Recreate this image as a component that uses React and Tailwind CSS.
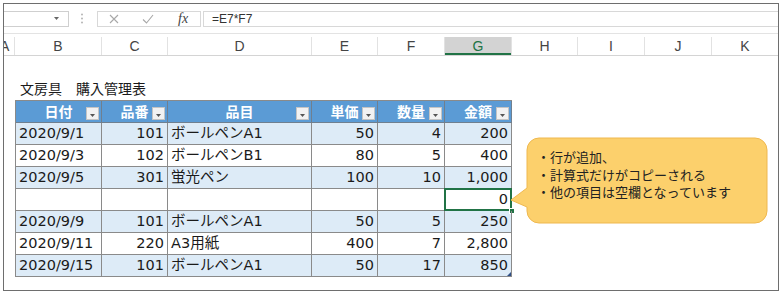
import React from 'react';

const jp = "font-['Noto_Sans_CJK_JP',sans-serif]";
const cellFont = "font-['DejaVu_Sans','Noto_Sans_CJK_JP',sans-serif]";

const colHeads = [
  { label: 'B', w: 'w-[87px]' },
  { label: 'C', w: 'w-[66px]' },
  { label: 'D', w: 'w-[144px]' },
  { label: 'E', w: 'w-[66px]' },
  { label: 'F', w: 'w-[67px]' },
  { label: 'G', w: 'w-[67px]', active: true },
  { label: 'H', w: 'w-[66px]' },
  { label: 'I', w: 'w-[67px]' },
  { label: 'J', w: 'w-[67px]' },
];

const cols = [
  { title: '日付', w: 'w-[86px]', align: 'justify-start' },
  { title: '品番', w: 'w-[66px]', align: 'justify-end' },
  { title: '品目', w: 'w-[144px]', align: 'justify-start' },
  { title: '単価', w: 'w-[66px]', align: 'justify-end' },
  { title: '数量', w: 'w-[67px]', align: 'justify-end' },
  { title: '金額', w: 'w-[67px]', align: 'justify-end' },
];

const rows = [
  ['2020/9/1', '101', 'ボールペンA1', '50', '4', '200'],
  ['2020/9/3', '102', 'ボールペンB1', '80', '5', '400'],
  ['2020/9/5', '301', '蛍光ペン', '100', '10', '1,000'],
  ['', '', '', '', '', '0'],
  ['2020/9/9', '101', 'ボールペンA1', '50', '5', '250'],
  ['2020/9/11', '220', 'A3用紙', '400', '7', '2,800'],
  ['2020/9/15', '101', 'ボールペンA1', '50', '17', '850'],
];

function FilterButton() {
  return (
    <span className="absolute right-[2px] bottom-[2px] w-[13px] h-[13px] bg-[#f2f2f2] border border-[#c4c4c4] flex items-center justify-center">
      <svg width="5" height="3" viewBox="0 0 5 3" className="mt-[3px]">
        <path d="M0 0 H5 L2.5 3 Z" fill="#555" />
      </svg>
    </span>
  );
}

function FormulaBar() {
  return (
    <div className="h-[30px] flex items-center border-b border-[#e3e3e3] font-['Liberation_Sans',sans-serif]">
      <div className="w-[65px] h-[16px] border border-l-0 border-[#cfcfcf] flex items-center justify-end pr-[9px]">
        <svg width="5" height="3" viewBox="0 0 5 3">
          <path d="M0 0 H5 L2.5 3 Z" fill="#666" />
        </svg>
      </div>
      <svg width="4" height="11" viewBox="0 0 4 11" className="ml-[11px]">
        <circle cx="2" cy="1.5" r="1" fill="#b5b5b5" />
        <circle cx="2" cy="5.5" r="1" fill="#b5b5b5" />
        <circle cx="2" cy="9.5" r="1" fill="#b5b5b5" />
      </svg>
      <div className="ml-[13px] w-[104px] h-[16px] border border-[#d8d8d8] flex items-center">
        <svg width="10" height="10" viewBox="0 0 10 10" className="ml-[11px]">
          <path d="M1 1 L9 9 M9 1 L1 9" stroke="#a8a8a8" strokeWidth="1.1" fill="none" />
        </svg>
        <svg width="12" height="10" viewBox="0 0 12 10" className="ml-[23px]">
          <path d="M1 5.5 L4.5 9 L11 1" stroke="#a8a8a8" strokeWidth="1.1" fill="none" />
        </svg>
        <span className="ml-[24px] text-[14px] leading-[14px] italic text-[#444] font-['Liberation_Serif',serif]">fx</span>
      </div>
      <div className="ml-[2px] flex-1 h-[16px] border border-r-0 border-[#d8d8d8] flex items-center pl-[8px] text-[12px] text-[#333]">
        =E7*F7
      </div>
    </div>
  );
}

function ColumnHeaders() {
  return (
    <div className="mt-[3px] h-[19px] flex border-b border-[#d4d4d4] text-[14px] text-[#444] font-['Liberation_Sans',sans-serif]">
      <div className="w-[11px] overflow-hidden border-r border-[#e2e2e2] flex items-center">
        <span className="-ml-[4px]">A</span>
      </div>
      {colHeads.map((c) => (
        <div
          key={c.label}
          className={`${c.w} flex items-center justify-center border-r border-[#e2e2e2] ${
            c.active ? 'bg-[#d3d3d3] text-[#217346] shadow-[inset_0_-2px_0_#217346]' : ''
          }`}
        >
          {c.label}
        </div>
      ))}
      <div className="flex-1 flex items-center justify-center">K</div>
    </div>
  );
}

function PurchaseTable() {
  return (
    <div className="relative w-[497px] border-l border-t border-[#8a8a8a]">
      <div className="flex">
        {cols.map((c) => (
          <div
            key={c.title}
            className={`relative ${c.w} h-[22px] bg-[#5b9bd5] border-r border-b border-[#6f7f8f] flex items-center justify-center text-white font-bold text-[14px] ${jp}`}
          >
            {c.title}
            <FilterButton />
          </div>
        ))}
      </div>
      {rows.map((r, i) => (
        <div key={i} className={`flex ${i % 2 === 0 ? 'bg-[#ddebf7]' : 'bg-white'}`}>
          {r.map((v, j) => (
            <div
              key={j}
              className={`relative ${cols[j].w} h-[22px] border-r border-b border-[#8a8a8a] flex items-center ${cols[j].align} px-[3px] text-[14.5px] text-[#1a1a1a] ${cellFont}`}
            >
              {v}
              {i === 3 && j === 5 && (
                <>
                  <span className="absolute -left-[1px] -top-[1px] -right-[1px] -bottom-[1px] border-2 border-[#217346]" />
                  <span className="absolute -right-[4px] -bottom-[4px] w-[6px] h-[6px] bg-[#217346] border border-white" />
                </>
              )}
            </div>
          ))}
        </div>
      ))}
      <svg width="4" height="4" viewBox="0 0 4 4" className="absolute right-[1px] bottom-[1px]">
        <path d="M4 0 V4 H0 Z" fill="#2f4f86" />
      </svg>
    </div>
  );
}

export default function App() {
  return (
    <div className="relative w-[783px] h-[297px] bg-white p-[3px] overflow-hidden">
      <div className="w-[776px] h-[288px] border border-[#6e6e6e] flex flex-col overflow-hidden">
        <FormulaBar />
        <ColumnHeaders />
        <div className="pl-[11px] pt-[22px]">
          <div className={`h-[20px] pl-[5px] mb-[2px] text-[14px] leading-[20px] text-[#1a1a1a] ${jp}`}>
            文房具　購入管理表
          </div>
          <PurchaseTable />
        </div>
      </div>

      <svg width="262" height="92" viewBox="0 0 262 92" className="absolute left-[508px] top-[135px]">
        <path
          d="M31 3 H247 A12 12 0 0 1 259 15 V76 A12 12 0 0 1 247 88 H31 A12 12 0 0 1 19 76 V72 L3 65 L19 53 V15 A12 12 0 0 1 31 3 Z"
          fill="#fcd06c"
          stroke="#efb84f"
          strokeWidth="1"
        />
      </svg>
      <div className={`absolute left-[537px] top-[148px] text-[13px] leading-[17.5px] text-[#222] ${jp}`}>
        <div>・行が追加、</div>
        <div>・計算式だけがコピーされる</div>
        <div>・他の項目は空欄となっています</div>
      </div>
    </div>
  );
}
